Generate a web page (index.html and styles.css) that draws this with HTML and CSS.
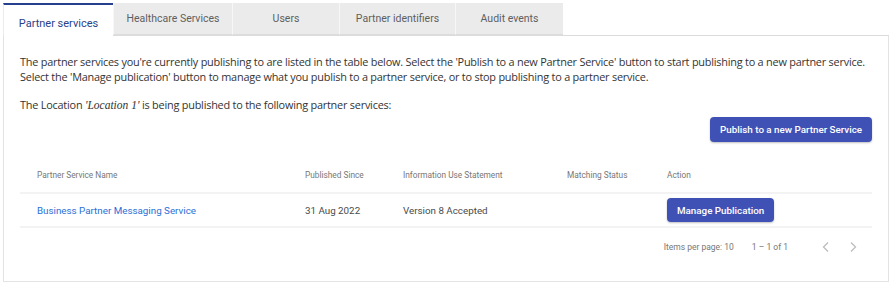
FILE: index.html
```html
<!DOCTYPE html>
<html lang="en">
<head>
    <meta charset="UTF-8">
    <meta name="viewport" content="width=device-width, initial-scale=1.0">
    <title>Partner services</title>
    <link rel="stylesheet" href="styles.css">
</head>
<body>
    <div class="page">
        <nav class="tabs">
            <a class="tab active" style="width:110px">Partner services</a>
            <a class="tab" style="width:119px">Healthcare Services</a>
            <a class="tab" style="width:107px">Users</a>
            <a class="tab" style="width:116px">Partner identifiers</a>
            <a class="tab" style="width:108px">Audit events</a>
        </nav>

        <div class="panel">
            <p class="intro">The partner services you're currently publishing to are listed in the table below. Select the 'Publish to a new Partner Service' button to start publishing to a new partner service. Select the 'Manage publication' button to manage what you publish to a partner service, or to stop publishing to a partner service.</p>
            <p class="intro last">The Location <em>'Location 1'</em> is being published to the following partner services:</p>

            <div class="toolbar">
                <button class="btn">Publish to a new Partner Service</button>
            </div>

            <table class="grid">
                <thead>
                    <tr>
                        <th class="c-name">Partner Service Name</th>
                        <th class="c-since">Published Since</th>
                        <th class="c-info">Information Use Statement</th>
                        <th class="c-match">Matching Status</th>
                        <th>Action</th>
                    </tr>
                </thead>
                <tbody>
                    <tr>
                        <td><a class="link" href="#">Business Partner Messaging Service</a></td>
                        <td>31 Aug 2022</td>
                        <td>Version 8 Accepted</td>
                        <td></td>
                        <td><button class="btn small">Manage Publication</button></td>
                    </tr>
                </tbody>
            </table>

            <div class="paginator">
                <span>Items per page: 10</span>
                <span class="range">1 – 1 of 1</span>
                <span class="nav-btn">
                    <svg width="10" height="12" viewBox="0 0 10 12"><path d="M7 1.5 L2.5 6 L7 10.5" fill="none" stroke="#bdbdbd" stroke-width="1.3"/></svg>
                </span>
                <span class="nav-btn">
                    <svg width="10" height="12" viewBox="0 0 10 12"><path d="M3 1.5 L7.5 6 L3 10.5" fill="none" stroke="#bdbdbd" stroke-width="1.3"/></svg>
                </span>
            </div>
        </div>
    </div>
</body>
</html>
```

FILE: styles.css
```css
body {
    margin: 0;
    background-color: #fff;
    font-family: Roboto, 'Liberation Sans', sans-serif;
    color: #333;
}
.page {
    padding: 3px 4px 0 3px;
}
.tabs {
    display: flex;
    height: 32px;
}
.tab {
    box-sizing: border-box;
    display: flex;
    align-items: center;
    justify-content: center;
    font-size: 10.5px;
    color: #5f5f5f;
    background-color: #ebebeb;
    border-left: 1px solid #f7f7f7;
    border-bottom: 1px solid #dcdcdc;
}
.tab.active {
    background-color: #fff;
    color: #2b3f8a;
    border-top: 2px solid #24408e;
    border-left: 1px solid #ececec;
    border-bottom: none;
    padding-top: 6px;
    font-size: 11px;
}
.panel {
    border: 1px solid #e3e3e3;
    border-top: none;
    padding: 19px 16px 0 16px;
    height: 247px;
    box-sizing: border-box;
    position: relative;
}
.panel::before {
    content: "";
    position: absolute;
    top: 0;
    left: 109px;
    right: -1px;
    border-top: 1px solid #dcdcdc;
}
.intro {
    font-family: 'Open Sans', sans-serif;
    font-size: 10.9px;
    line-height: 15px;
    color: #333;
    margin: 0 0 13px 0;
    letter-spacing: -0.22px;
}
.intro.last {
    margin-bottom: 4px;
}
.intro em {
    font-family: 'Liberation Serif', serif;
    font-size: 11.5px;
    letter-spacing: 0;
}
.toolbar {
    display: flex;
    justify-content: flex-end;
}
.btn {
    background-color: #3f51b5;
    color: #fff;
    border: none;
    border-radius: 4px;
    font-family: Roboto, sans-serif;
    font-weight: 500;
    font-size: 9.8px;
    height: 25px;
    padding: 0 10px;
    box-shadow: 0 1px 2px rgba(0,0,0,0.25);
}
.btn.small {
    height: 24px;
    padding: 0 10px;
}
.grid {
    width: 100%;
    border-collapse: collapse;
    margin-top: 16px;
}
.grid th {
    text-align: left;
    font-weight: normal;
    font-size: 8.3px;
    color: #777;
    height: 34px;
    padding: 0 0 0 17px;
    border-bottom: 2px solid #f3f3f3;
}
.grid td {
    font-size: 9.8px;
    height: 32px;
    padding: 0 0 0 17px;
    border-bottom: 2px solid #f3f3f3;
    color: #4a4a4a;
}
.grid th.c-name { width: 251px; }
.grid th.c-since { width: 81px; }
.grid th.c-info { width: 147px; }
.grid th.c-match { width: 83px; }
.link {
    color: #2a6fd8;
    text-decoration: none;
}
.paginator {
    display: flex;
    justify-content: flex-end;
    align-items: center;
    font-size: 8.5px;
    color: #777;
    height: 38px;
    padding-right: 6px;
}
.paginator .range {
    margin-left: 18px;
    margin-right: 24px;
}
.nav-btn {
    display: flex;
    width: 27px;
    justify-content: center;
}
```
